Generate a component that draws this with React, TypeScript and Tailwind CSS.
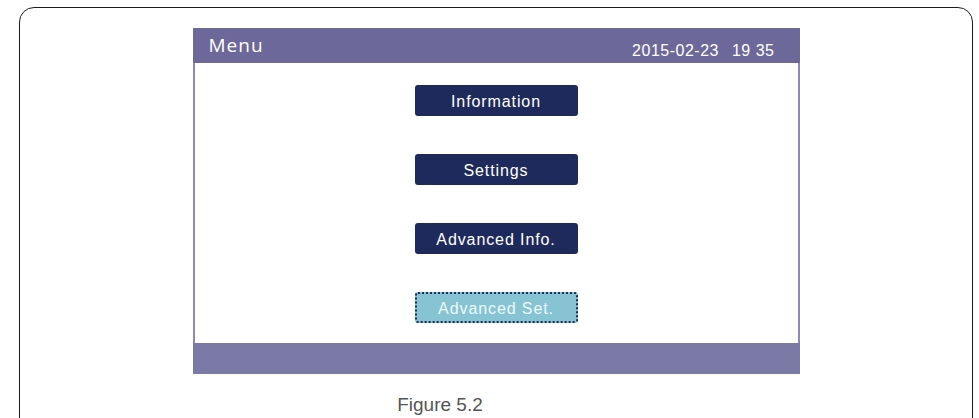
const items = [
  { label: "Information", selected: false },
  { label: "Settings", selected: false },
  { label: "Advanced Info.", selected: false },
  { label: "Advanced Set.", selected: true },
];

function MenuButton({ label, selected }: { label: string; selected: boolean }) {
  return (
    <div
      className={
        selected
          ? "h-[31px] w-[163px] rounded-[3px] border-2 border-dotted border-[#1f2a5c] bg-[#86c4d4] text-center text-[16px] leading-[27px] tracking-[0.9px] text-[#eef8fb] pt-[1px]"
          : "h-[31px] w-[163px] rounded-[3px] bg-[#1f2a5c] text-center text-[16px] leading-[29px] tracking-[0.9px] text-white pt-[2px]"
      }
      style={{ fontFamily: '"Liberation Sans", Arial, sans-serif' }}
    >
      {label}
    </div>
  );
}

export default function App() {
  return (
    <div className="h-[418px] w-[979px] overflow-hidden bg-white pt-[7px]">
      <div className="ml-[19px] h-[440px] w-[954px] rounded-[15px] border border-[#1e1a1a] pt-[20px]">
        {/* Inverter screen */}
        <div className="mx-auto w-[607px]">
          <div className="flex h-[35px] items-start justify-between bg-[#6c6899] pl-[16px] pr-[25px] text-white">
            <span
              className="pt-[5px] text-[19px] leading-[25px] tracking-[1px]"
              style={{ fontFamily: '"Open Sans", sans-serif' }}
            >
              Menu
            </span>
            <span
              className="flex gap-[13px] pt-[15px] text-[16px] leading-[16px] tracking-[0.5px]"
              style={{ fontFamily: '"Liberation Sans", Arial, sans-serif' }}
            >
              <span>2015-02-23</span>
              <span>19 35</span>
            </span>
          </div>
          <div className="flex h-[280px] flex-col items-center gap-[38px] border-x-2 border-[#8c88c4] bg-white pt-[22px]">
            {items.map((it) => (
              <MenuButton key={it.label} label={it.label} selected={it.selected} />
            ))}
          </div>
          <div className="h-[31px] bg-[#7b79a6]" />
        </div>

        {/* Caption */}
        <div
          className="mt-[20px] flex justify-center pr-[112px] text-[19px] leading-[22px] text-[#555555]"
          style={{ fontFamily: '"Liberation Sans", Arial, sans-serif' }}
        >
          Figure 5.2
        </div>
      </div>
    </div>
  );
}
